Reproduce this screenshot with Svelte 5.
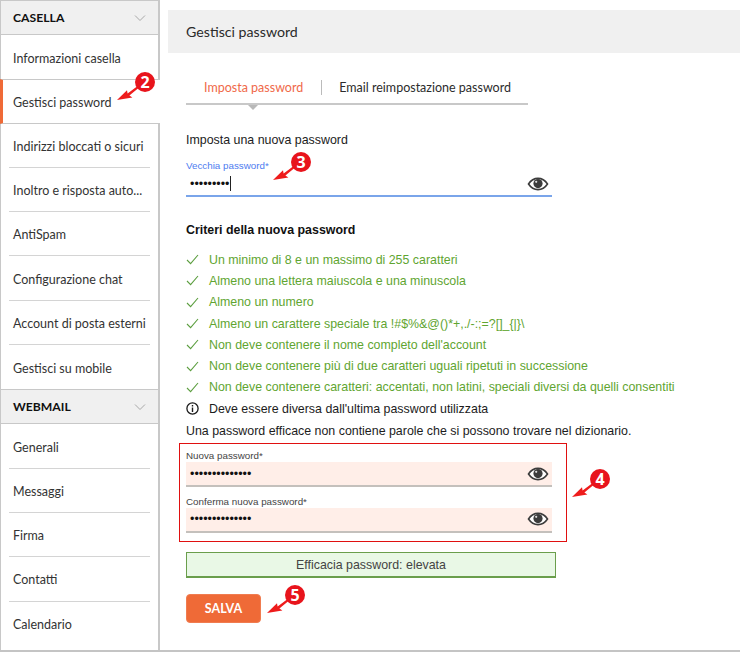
<script>
  const boxItems = ["Informazioni casella", "Gestisci password", "Indirizzi bloccati o sicuri", "Inoltro e risposta auto...", "AntiSpam", "Configurazione chat", "Account di posta esterni", "Gestisci su mobile"];
  const webmailItems = ["Generali", "Messaggi", "Firma", "Contatti", "Calendario"];
  const activeItem = "Gestisci password";

  const criteria = [
    "Un minimo di 8 e un massimo di 255 caratteri",
    "Almeno una lettera maiuscola e una minuscola",
    "Almeno un numero",
    "Almeno un carattere speciale tra !#$%&@()*+,./-:;=?[]_{|}\\",
    "Non deve contenere il nome completo dell'account",
    "Non deve contenere più di due caratteri uguali ripetuti in successione",
    "Non deve contenere caratteri: accentati, non latini, speciali diversi da quelli consentiti",
  ];

  // numbered callouts, x/y is the arrow tip
  const callouts = [
    { n: 2, x: 117, y: 100 },
    { n: 3, x: 273, y: 180 },
    { n: 4, x: 572, y: 497 },
    { n: 5, x: 267, y: 613 },
  ];
</script>

{#snippet eye()}
  <svg class="eye" width="22" height="16" viewBox="0 0 22 16" aria-hidden="true">
    <path d="M1.5 8C4 4.2 7.2 2.4 11 2.4S18 4.2 20.5 8C18 11.8 14.8 13.6 11 13.6S4 11.8 1.5 8Z" fill="#fff" stroke="#3c3c3c" stroke-width="1.6" />
    <circle cx="11" cy="7.6" r="4.6" fill="#3c3c3c" />
    <circle cx="9.2" cy="5.8" r="1.1" fill="#ddd" />
  </svg>
{/snippet}

{#snippet menu(title, items)}
  <div class="menu-title">
    <span>{title}</span>
    <svg width="12" height="8" viewBox="0 0 12 8" aria-hidden="true"><path d="M1 1.5 6 6.5 11 1.5" fill="none" stroke="#a8a8a8" /></svg>
  </div>
  <ul class="menu">
    {#each items as item}
      <li class:active={item === activeItem}><span>{item}</span></li>
    {/each}
  </ul>
{/snippet}

<div class="page">
  <aside class="sidebar">
    {@render menu("CASELLA", boxItems)}
    {@render menu("WEBMAIL", webmailItems)}
  </aside>

  <main class="main">
    <header class="title">Gestisci password</header>

    <div class="content">
      <nav class="tabs">
        <span class="tab current">Imposta password</span>
        <span class="tab">Email reimpostazione password</span>
      </nav>

      <p class="lead">Imposta una nuova password</p>

      <div class="field focused">
        <span class="label">Vecchia password*</span>
        <div class="input"><span class="dots">•••••••••</span><i class="caret"></i>{@render eye()}</div>
      </div>

      <h3>Criteri della nuova password</h3>

      <ul class="criteria">
        {#each criteria as text}
          <li>
            <svg width="13" height="11" viewBox="0 0 13 11" aria-hidden="true"><path d="M1 6 4.6 9.6 12 1" fill="none" stroke="#5c9e3f" stroke-width="1.1" /></svg>
            <span>{text}</span>
          </li>
        {/each}
        <li class="info">
          <svg width="13" height="13" viewBox="0 0 13 13" aria-hidden="true">
            <circle cx="6.5" cy="6.5" r="5.6" fill="none" stroke="#1a1a1a" stroke-width="1.3" />
            <path d="M6.5 5.6V10M6.5 3V4.4" stroke="#1a1a1a" stroke-width="1.4" />
          </svg>
          <span>Deve essere diversa dall'ultima password utilizzata</span>
        </li>
      </ul>

      <p class="hint">Una password efficace non contiene parole che si possono trovare nel dizionario.</p>

      <div class="highlight">
        <div class="field filled">
          <span class="label">Nuova password*</span>
          <div class="input"><span class="dots">••••••••••••••</span>{@render eye()}</div>
        </div>
        <div class="field filled">
          <span class="label">Conferma nuova password*</span>
          <div class="input"><span class="dots">••••••••••••••</span>{@render eye()}</div>
        </div>
      </div>

      <div class="strength">Efficacia password: elevata</div>

      <button type="button" class="save">SALVA</button>
    </div>
  </main>

  {#each callouts as c}
    <div class="callout" style="left: {c.x}px; top: {c.y}px">
      <svg width="30" height="24" viewBox="0 0 30 24" aria-hidden="true">
        <path d="M0 23 10 13.2 10.6 16.6 26 5 27 6.4 12.4 18.4 15.4 20.4Z" fill="#ee1c1c" />
      </svg>
      <b>{c.n}</b>
    </div>
  {/each}
</div>

<style>
  :global(body) {
    margin: 0;
    background: #fff;
  }
  .page {
    position: relative;
    display: grid;
    grid-template-columns: 160px 1fr;
    column-gap: 8px;
    width: 740px;
    height: 652px;
    overflow: hidden;
    box-sizing: border-box;
    border-bottom: 2px solid #c4c4c4;
    font-family: "Liberation Sans", Arial, sans-serif;
    color: #1c1c1c;
  }

  .sidebar {
    font-family: Lato, sans-serif;
    border-top: 1px solid #c8c8c8;
    border-left: 1px solid #c8c8c8;
    border-right: 2px solid #c8c8c8;
    box-sizing: border-box;
    position: relative;
  }
  .menu-title {
    display: flex;
    align-items: center;
    justify-content: space-between;
    height: 33px;
    padding: 0 12px;
    background: #f0f0f0;
    border-bottom: 1px solid #c8c8c8;
    font-size: 12.2px;
    font-weight: 700;
    color: #111;
  }
  .menu + .menu-title {
    border-top: 1px solid #c8c8c8;
  }
  .menu {
    list-style: none;
    margin: 0;
    padding: 0;
  }
  .menu li {
    height: 44.3px;
    box-sizing: border-box;
    padding: 0 8px;
  }
  .menu li span {
    display: flex;
    align-items: center;
    height: 100%;
    box-sizing: border-box;
    padding: 2px 0 0 4px;
    border-bottom: 1px solid #d4d4d4;
    font-size: 12.5px;
    color: #333;
    white-space: nowrap;
  }
  .menu li:last-child span {
    border-bottom: none;
  }
  .menu li:has(+ .active) span {
    border-bottom: none;
  }
  .menu li.active {
    position: relative;
    margin: 0 -2px 0 -1px;
    padding-left: 9px;
    background: #fff;
    border-top: 1px solid #c8c8c8;
    border-bottom: 1px solid #c8c8c8;
    border-left: 3px solid #ef6a37;
  }
  .menu li.active span {
    border-bottom: none;
    padding-left: 1px;
  }

  .main {
    min-width: 0;
    padding-top: 10px;
  }
  .title {
    height: 43px;
    display: flex;
    align-items: center;
    padding-left: 18px;
    background: #f0f0f0;
    font-family: Lato, sans-serif;
    font-size: 14.2px;
    color: #2a2a2a;
  }
  .content {
    padding: 0 0 0 18px;
  }

  .tabs {
    position: relative;
    display: flex;
    align-items: center;
    width: 342px;
    height: 52px;
    box-sizing: border-box;
    padding: 19px 0 0 18px;
    border-bottom: 2px solid #c8c8c8;
    font-family: Lato, sans-serif;
    font-size: 12.5px;
  }
  .tabs::after {
    content: "";
    position: absolute;
    left: 62px;
    top: 52px;
    border: 5px solid transparent;
    border-top: 5px solid #b8b8b8;
    border-bottom: none;
  }
  .tab + .tab {
    margin-left: 36px;
    position: relative;
    color: #2c2c2c;
  }
  .tab + .tab::before {
    content: "";
    position: absolute;
    left: -18px;
    top: 0;
    height: 15px;
    border-left: 1px solid #bbb;
  }
  .tab.current {
    color: #f0694a;
  }

  .lead {
    margin: 28px 0 0;
    font-size: 12.4px;
    line-height: 14px;
  }

  .field {
    display: flex;
    flex-direction: column;
    width: 366px;
  }
  .focused {
    margin-top: 13px;
  }
  .label {
    font-size: 9.8px;
    line-height: 12px;
    color: #444;
  }
  .focused .label {
    color: #4d7cf0;
  }
  .input {
    display: flex;
    align-items: center;
    height: 23px;
    padding: 0 3px 0 4px;
    border-bottom: 2px solid #c4c0bc;
  }
  .focused .input {
    border-bottom-color: #7aa5ea;
  }
  .filled .input {
    background: #ffeee8;
  }
  .dots {
    font-size: 12.5px;
    color: #111;
  }
  .caret {
    width: 1px;
    height: 15px;
    margin-left: 1px;
    background: #222;
  }
  .eye {
    margin-left: auto;
  }

  h3 {
    margin: 26px 0 0;
    font-size: 12.4px;
    line-height: 14px;
    font-weight: 700;
    color: #111;
  }

  .criteria {
    list-style: none;
    margin: 12px 0 0;
    padding: 0;
  }
  .criteria li {
    display: flex;
    align-items: center;
    height: 21.3px;
    font-size: 12.4px;
    color: #5fa531;
    white-space: nowrap;
  }
  .criteria svg {
    flex: none;
    margin-right: 10px;
  }
  .criteria .info {
    color: #1c1c1c;
  }
  .hint {
    margin: 5px 0 0;
    font-size: 12.4px;
    line-height: 14px;
  }

  .highlight {
    width: 388px;
    height: 99px;
    box-sizing: border-box;
    margin: 5px 0 0 -7px;
    padding: 6px 0 0 6px;
    border: 1px solid #e01010;
    display: flex;
    flex-direction: column;
    gap: 8.4px;
  }

  .strength {
    width: 370px;
    height: 26px;
    box-sizing: border-box;
    margin-top: 10px;
    display: flex;
    align-items: center;
    justify-content: center;
    background: #e9f8e6;
    border: 1px solid #6a9e4c;
    border-bottom-width: 2px;
    font-size: 12.4px;
    color: #444;
  }

  .save {
    display: block;
    width: 75px;
    height: 29px;
    margin-top: 16px;
    padding: 0;
    background: #ef6a37;
    border: 1px solid #f07c50;
    border-radius: 4px;
    color: #fff;
    font-family: Lato, sans-serif;
    font-size: 12.5px;
    font-weight: 700;
  }

  .callout {
    position: absolute;
    width: 0;
    height: 0;
  }
  .callout svg {
    position: absolute;
    left: 0;
    top: -23px;
  }
  .callout b {
    position: absolute;
    left: 18px;
    top: -28px;
    width: 20px;
    height: 20px;
    border-radius: 50%;
    background: #e8141c;
    color: #fff;
    font-family: "Open Sans", sans-serif;
    font-size: 16px;
    line-height: 20px;
    text-align: center;
  }
</style>
